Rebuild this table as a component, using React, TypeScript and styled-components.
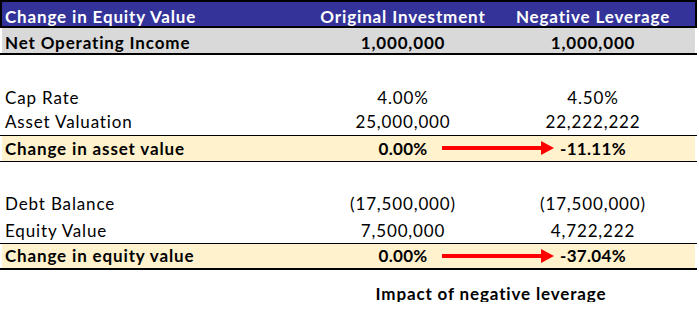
import React from "react";
import styled, { createGlobalStyle } from "styled-components";

const Global = createGlobalStyle`
  html, body { margin: 0; padding: 0; background: #ffffff; }
`;

const Sheet = styled.div`
  width: 697px;
  font-family: Lato, "Open Sans", sans-serif;
  font-size: 17px;
  color: #000;
  letter-spacing: 0.85px;
`;

const Grid = styled.div<{ $h: number; $pb: number }>`
  display: grid;
  grid-template-columns: 308px 186px 1fr;
  align-items: end;
  height: ${(p) => p.$h}px;
  padding-bottom: ${(p) => p.$pb}px;
  box-sizing: border-box;
  line-height: 17px;
`;

const HeaderRow = styled(Grid)`
  border: 2px solid #000;
  height: ${(p) => p.$h + 4}px;
  background: #333399;
  color: #fff;
  font-weight: 700;
`;

const PlainRow = styled(Grid)<{ $bg?: string }>`
  margin: 0 2px;
  background: ${(p) => p.$bg || "transparent"};
  font-weight: ${(p) => (p.$bg ? 700 : 400)};
`;

const Ruled = styled.div<{ $top: number; $bottom: number }>`
  border-top: ${(p) => p.$top}px solid #000;
  border-bottom: ${(p) => p.$bottom}px solid #000;
`;

const HighlightRow = styled(Grid)`
  position: relative;
  margin: 0 2px;
  background: #fff2cc;
  font-weight: 700;
`;

const Spacer = styled.div<{ $h: number }>`
  height: ${(p) => p.$h}px;
`;

const Label = styled.div`
  padding-left: 3px;
  white-space: nowrap;
`;

const Value = styled.div<{ $last?: boolean; $tight?: boolean }>`
  text-align: center;
  white-space: nowrap;
  padding-right: ${(p) => (p.$last ? 5 : 0)}px;
  letter-spacing: ${(p) => (p.$tight ? "0.3px" : "inherit")};
`;

const ArrowMark = styled.svg`
  position: absolute;
  left: 440px;
  top: 4px;
`;

const Caption = styled.div`
  padding-left: 285px;
  padding-top: 15px;
  text-align: center;
  font-weight: 700;
  line-height: 17px;
`;

const Arrow = () => (
  <ArrowMark width="114" height="16" viewBox="0 0 114 16">
    <rect x="0" y="6" width="101" height="4" fill="#ff0000" />
    <polygon points="99,1 112,8 99,15" fill="#ff0000" />
  </ArrowMark>
);

export default function App() {
  return (
    <>
      <Global />
      <Sheet>
        <HeaderRow $h={24} $pb={1}>
          <Label>Change in Equity Value</Label>
          <Value>Original Investment</Value>
          <Value $last>Negative Leverage</Value>
        </HeaderRow>
        <Ruled $top={0} $bottom={2}>
          <PlainRow $h={25} $pb={2} $bg="#d9d9d9">
            <Label>Net Operating Income</Label>
            <Value>1,000,000</Value>
            <Value $last>1,000,000</Value>
          </PlainRow>
        </Ruled>
        <Spacer $h={32} />
        <PlainRow $h={24} $pb={5}>
          <Label>Cap Rate</Label>
          <Value>4.00%</Value>
          <Value $last>4.50%</Value>
        </PlainRow>
        <PlainRow $h={24} $pb={5}>
          <Label>Asset Valuation</Label>
          <Value>25,000,000</Value>
          <Value $last>22,222,222</Value>
        </PlainRow>
        <Ruled $top={1} $bottom={1}>
          <HighlightRow $h={25} $pb={4}>
            <Label>Change in asset value</Label>
            <Value $tight>0.00%</Value>
            <Value $last $tight>-11.11%</Value>
            <Arrow />
          </HighlightRow>
        </Ruled>
        <Spacer $h={27} />
        <PlainRow $h={27} $pb={4}>
          <Label>Debt Balance</Label>
          <Value>(17,500,000)</Value>
          <Value $last>(17,500,000)</Value>
        </PlainRow>
        <PlainRow $h={27} $pb={4}>
          <Label>Equity Value</Label>
          <Value>7,500,000</Value>
          <Value $last>4,722,222</Value>
        </PlainRow>
        <Ruled $top={1} $bottom={2}>
          <HighlightRow $h={24} $pb={4}>
            <Label>Change in equity value</Label>
            <Value $tight>0.00%</Value>
            <Value $last $tight>-37.04%</Value>
            <Arrow />
          </HighlightRow>
        </Ruled>
        <Caption>Impact of negative leverage</Caption>
      </Sheet>
    </>
  );
}
